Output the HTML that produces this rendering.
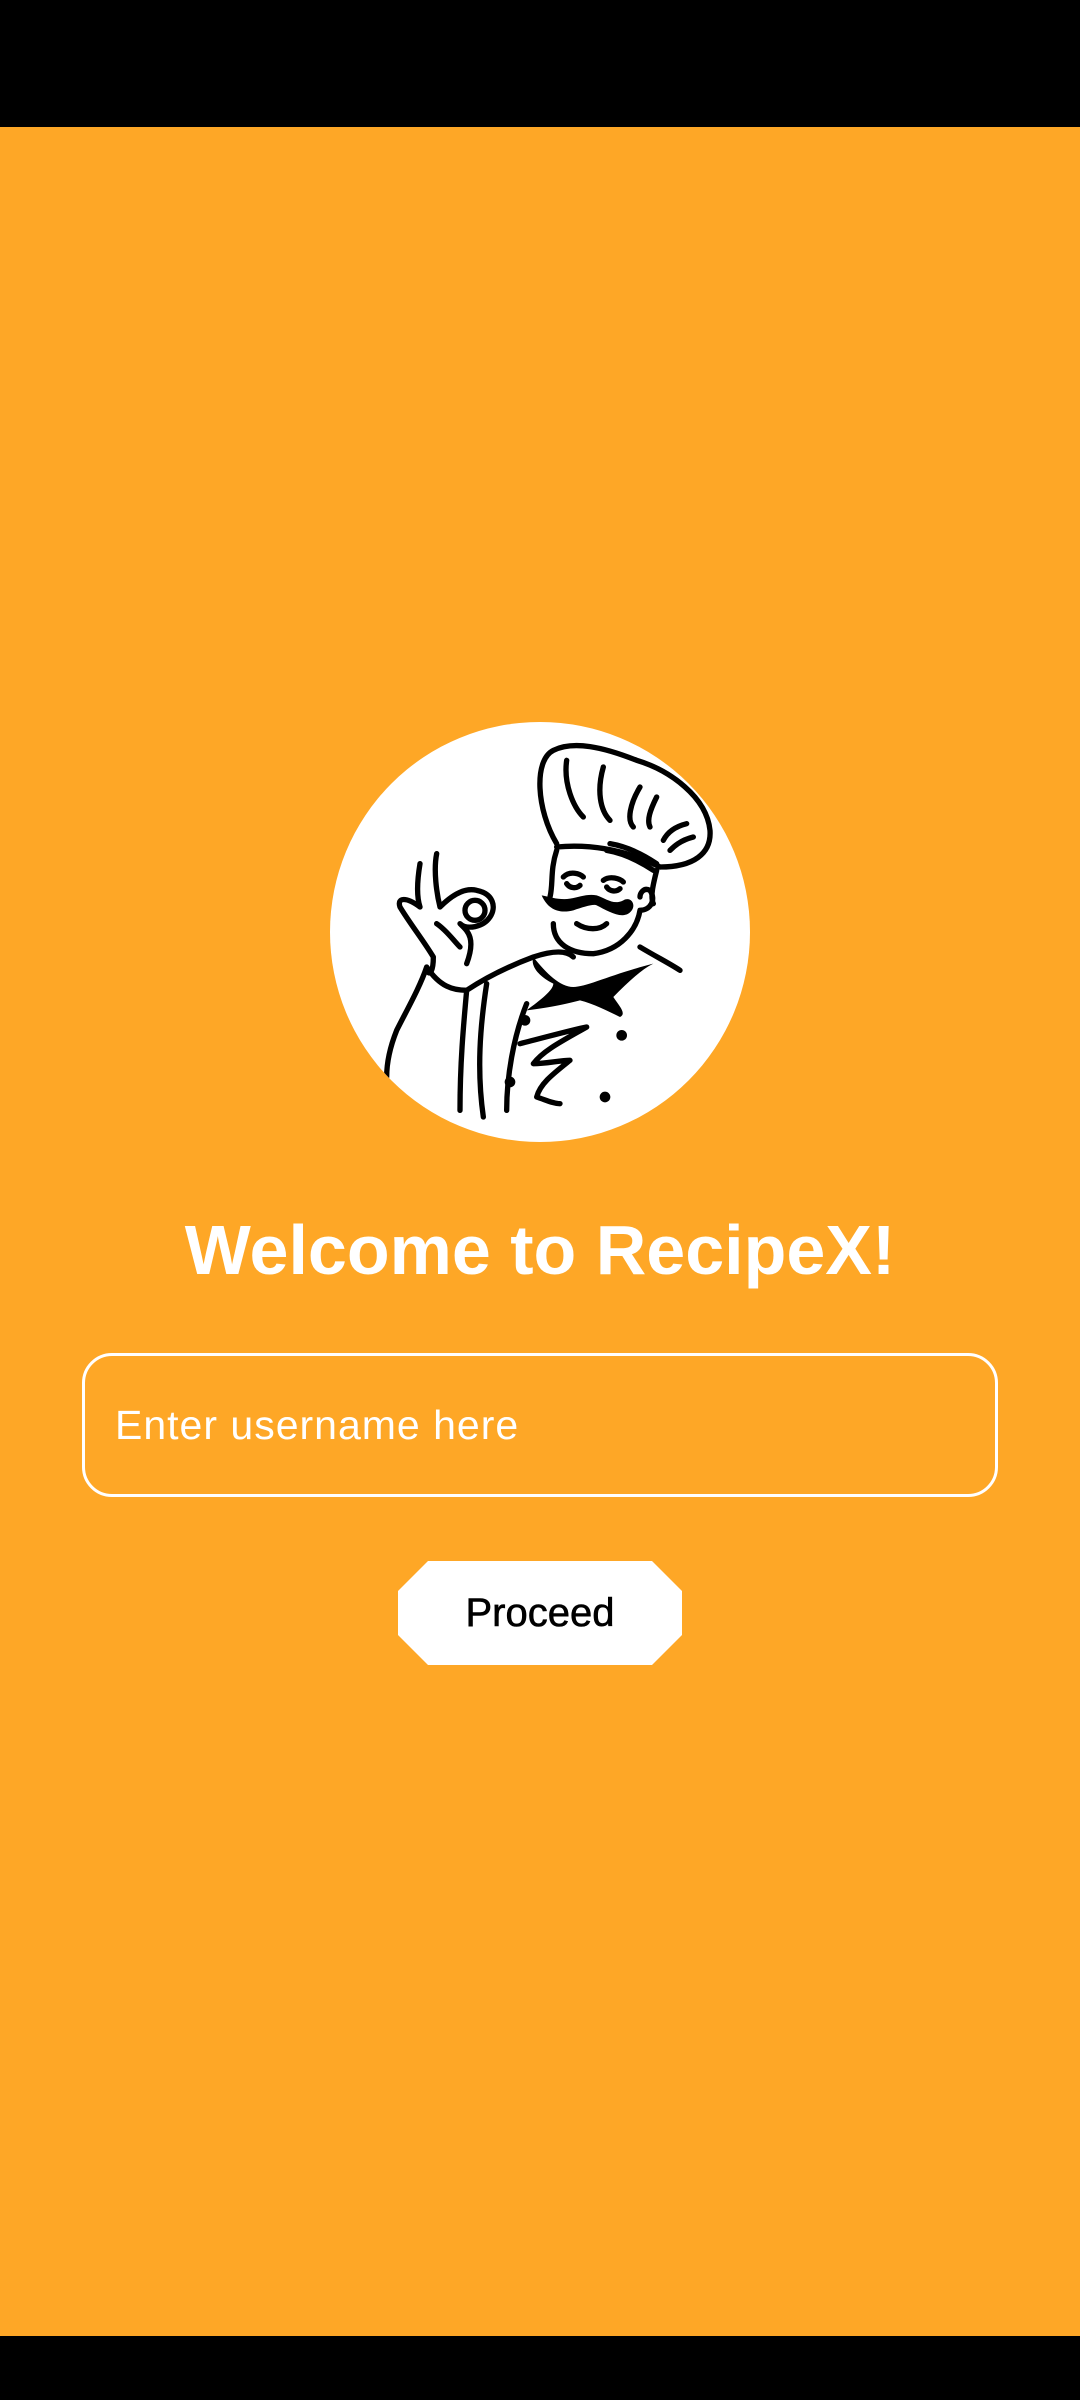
<!DOCTYPE html>
<html><head><meta charset="utf-8"><style>
html,body{margin:0;padding:0}
body{width:1080px;height:2400px;background:#FEA726;position:relative;overflow:hidden;font-family:"Liberation Sans",Roboto,sans-serif}
.top{position:absolute;left:0;top:0;width:1080px;height:127px;background:#000}
.bot{position:absolute;left:0;top:2336px;width:1080px;height:64px;background:#000}
.circle{position:absolute;left:330px;top:722px;width:420px;height:420px;border-radius:50%;background:#fff;overflow:hidden}
h1{position:absolute;left:0;width:1080px;top:1208px;margin:0;text-align:center;color:#fff;font-size:70px;font-weight:bold;line-height:84px}
.inp{position:absolute;left:82px;top:1353px;width:910px;height:138px;border:3px solid #fff;border-radius:30px}
.inp span{position:absolute;left:30px;top:46px;color:#fff;font-size:41px;letter-spacing:1px}
.btn{position:absolute;left:398px;top:1561px;width:284px;height:104px;background:#fff;clip-path:polygon(30px 0,254px 0,284px 30px,284px 74px,254px 104px,30px 104px,0 74px,0 30px);text-align:center;line-height:104px;font-size:40px;color:#000;-webkit-text-stroke:0.6px #000}
</style></head><body>
<div class="top"></div>
<div class="circle">
<svg width="420" height="420" viewBox="30 35 1260 1260" style="display:block">
<g fill="none" stroke="#000" stroke-width="16" stroke-linecap="round" stroke-linejoin="round">
<path d="M710 400 C650 300 640 150 700 120 C760 90 850 110 950 150 C1050 180 1160 260 1170 360 C1175 430 1120 470 1020 470"/>
<path d="M710 410 C820 400 920 420 1020 470"/>
<path d="M870 400 C930 410 980 440 1010 460 M860 420 C920 430 970 460 1000 480"/>
<path d="M740 150 C730 220 760 290 790 320 M850 170 C830 240 840 300 870 330 M960 230 C930 280 920 330 940 350 M1010 260 C990 300 980 330 990 350 M1100 340 C1060 350 1040 370 1030 390 M1120 380 C1080 390 1060 410 1050 420"/>
<path d="M710 420 C690 480 700 520 690 560 M1010 480 C1000 520 990 560 1000 580"/>
<path d="M700 640 C700 700 750 730 820 730 C900 720 950 660 960 600 C990 600 1010 570 990 540 C970 530 960 550 960 560"/>
<path d="M730 500 C750 480 780 490 790 500 M850 510 C870 495 900 505 910 515 M740 520 C750 535 770 535 780 525 M860 530 C870 545 890 545 900 535"/>
<path d="M770 640 C800 660 840 660 860 640"/>
<path d="M300 460 C290 520 290 560 300 590 C260 560 230 560 240 590 C270 640 310 690 340 740 C340 780 330 800 320 780 M350 430 C340 480 350 550 360 590 M360 590 C390 560 430 530 470 540 C520 550 530 590 510 620 C490 650 440 660 420 640 M420 640 C440 660 470 680 440 760 M350 640 C380 660 400 690 420 710"/>
<circle cx="465" cy="600" r="30"/>
<path d="M320 770 C300 830 260 900 230 960 C210 1010 200 1060 200 1100 M320 770 C360 830 400 840 440 840 C500 800 560 770 640 740 M440 840 C430 950 420 1060 420 1200 M500 820 C480 950 470 1080 490 1220 M640 740 C700 720 740 720 760 740 M960 710 C1010 740 1050 760 1080 780 M620 880 C580 980 560 1100 560 1200"/>
<path d="M600 1000 C680 980 750 960 800 950 C730 990 670 1020 640 1060 C680 1060 720 1050 750 1050 C700 1090 660 1120 650 1160 C680 1170 700 1180 720 1180"/>
</g>
<g fill="#000">
<path d="M665 555 C685 600 720 610 760 600 C790 590 820 580 830 585 C860 600 900 625 925 610 C955 590 935 555 910 570 C880 585 860 565 830 555 C800 550 780 560 750 565 C720 570 690 560 665 555Z"/>
<path d="M640 740 C680 790 720 830 760 830 C800 830 880 790 1000 760 C960 780 920 820 880 860 C900 890 920 910 900 920 C860 900 820 880 780 870 C740 880 700 890 620 900 C660 870 700 840 700 820 C660 800 630 770 640 740Z"/>
<circle cx="615" cy="930" r="16"/><circle cx="905" cy="975" r="16"/><circle cx="570" cy="1115" r="16"/><circle cx="855" cy="1160" r="16"/>
</g>
</svg>
</div>
<h1>Welcome to RecipeX!</h1>
<div class="inp"><span>Enter username here</span></div>
<div class="btn">Proceed</div>
<div class="bot"></div>
</body></html>
